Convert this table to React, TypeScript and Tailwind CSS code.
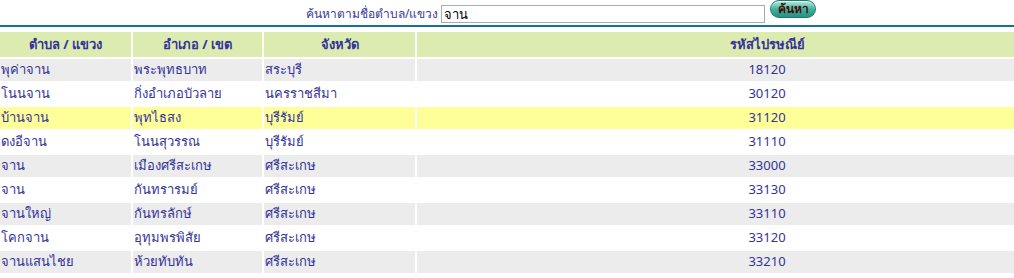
import { FC } from 'react';

const rows = [
    ['พุค่าจาน', 'พระพุทธบาท', 'สระบุรี', '18120'],
    ['โนนจาน', 'กิ่งอำเภอบัวลาย', 'นครราชสีมา', '30120'],
    ['บ้านจาน', 'พุทไธสง', 'บุรีรัมย์', '31120'],
    ['ดงอีจาน', 'โนนสุวรรณ', 'บุรีรัมย์', '31110'],
    ['จาน', 'เมืองศรีสะเกษ', 'ศรีสะเกษ', '33000'],
    ['จาน', 'กันทรารมย์', 'ศรีสะเกษ', '33130'],
    ['จานใหญ่', 'กันทรลักษ์', 'ศรีสะเกษ', '33110'],
    ['โคกจาน', 'อุทุมพรพิสัย', 'ศรีสะเกษ', '33120'],
    ['จานแสนไชย', 'ห้วยทับทัน', 'ศรีสะเกษ', '33210'],
];

const App: FC = () => {
    return (
        <div className="min-h-screen bg-white text-[13px] text-[#333399] font-['Tahoma','Noto_Sans',sans-serif]">
            {/* Search form */}
            <div className="h-[25px] flex items-start pl-[306px]">
                <span className="mt-[6px] text-[12px] leading-[16px] text-[#3a3a9a]">ค้นหาตามชื่อตำบล/แขวง</span>
                <input
                    defaultValue="จาน"
                    className="ml-[3px] mt-[5px] w-[324px] h-[18px] border border-[#a5acb2] px-[2px] text-[13px] leading-[16px] text-black outline-none"
                />
                <button className="ml-[5px] w-[46px] h-[18px] rounded-full border border-[#237a6c] bg-gradient-to-b from-[#b4ecdf] via-[#3db3a0] to-[#26917e] text-[12px] font-bold leading-[14px] text-[#4a0d0d] shadow-[inset_0_1px_0_rgba(255,255,255,0.6)]">
                    ค้นหา
                </button>
            </div>
            <div className="h-[2px] bg-[#1b6f95]" />

            {/* Results table */}
            <div className="mt-[5px] grid grid-cols-[131px_129px_151px_1fr] gap-[2px]">
                {['ตำบล / แขวง', 'อำเภอ / เขต', 'จังหวัด', 'รหัสไปรษณีย์'].map((h, j) => (
                    <div
                        key={h}
                        className={`h-[25px] flex items-center justify-center bg-[#dcebb0] font-bold ${j === 3 ? 'pl-[104px]' : ''}`}
                    >
                        {h}
                    </div>
                ))}
                {rows.map((r, i) => {
                    const bg = i === 2 ? 'bg-[#ffff99]' : i % 2 === 0 ? 'bg-[#ececec]' : 'bg-white';
                    return r.map((c, j) => (
                        <div
                            key={i + '-' + j}
                            className={`h-[22px] flex items-center px-[1px] ${bg} ${j === 3 ? 'justify-center pl-[104px]' : ''}`}
                        >
                            {c}
                        </div>
                    ));
                })}
            </div>
        </div>
    );
};

export default App;
